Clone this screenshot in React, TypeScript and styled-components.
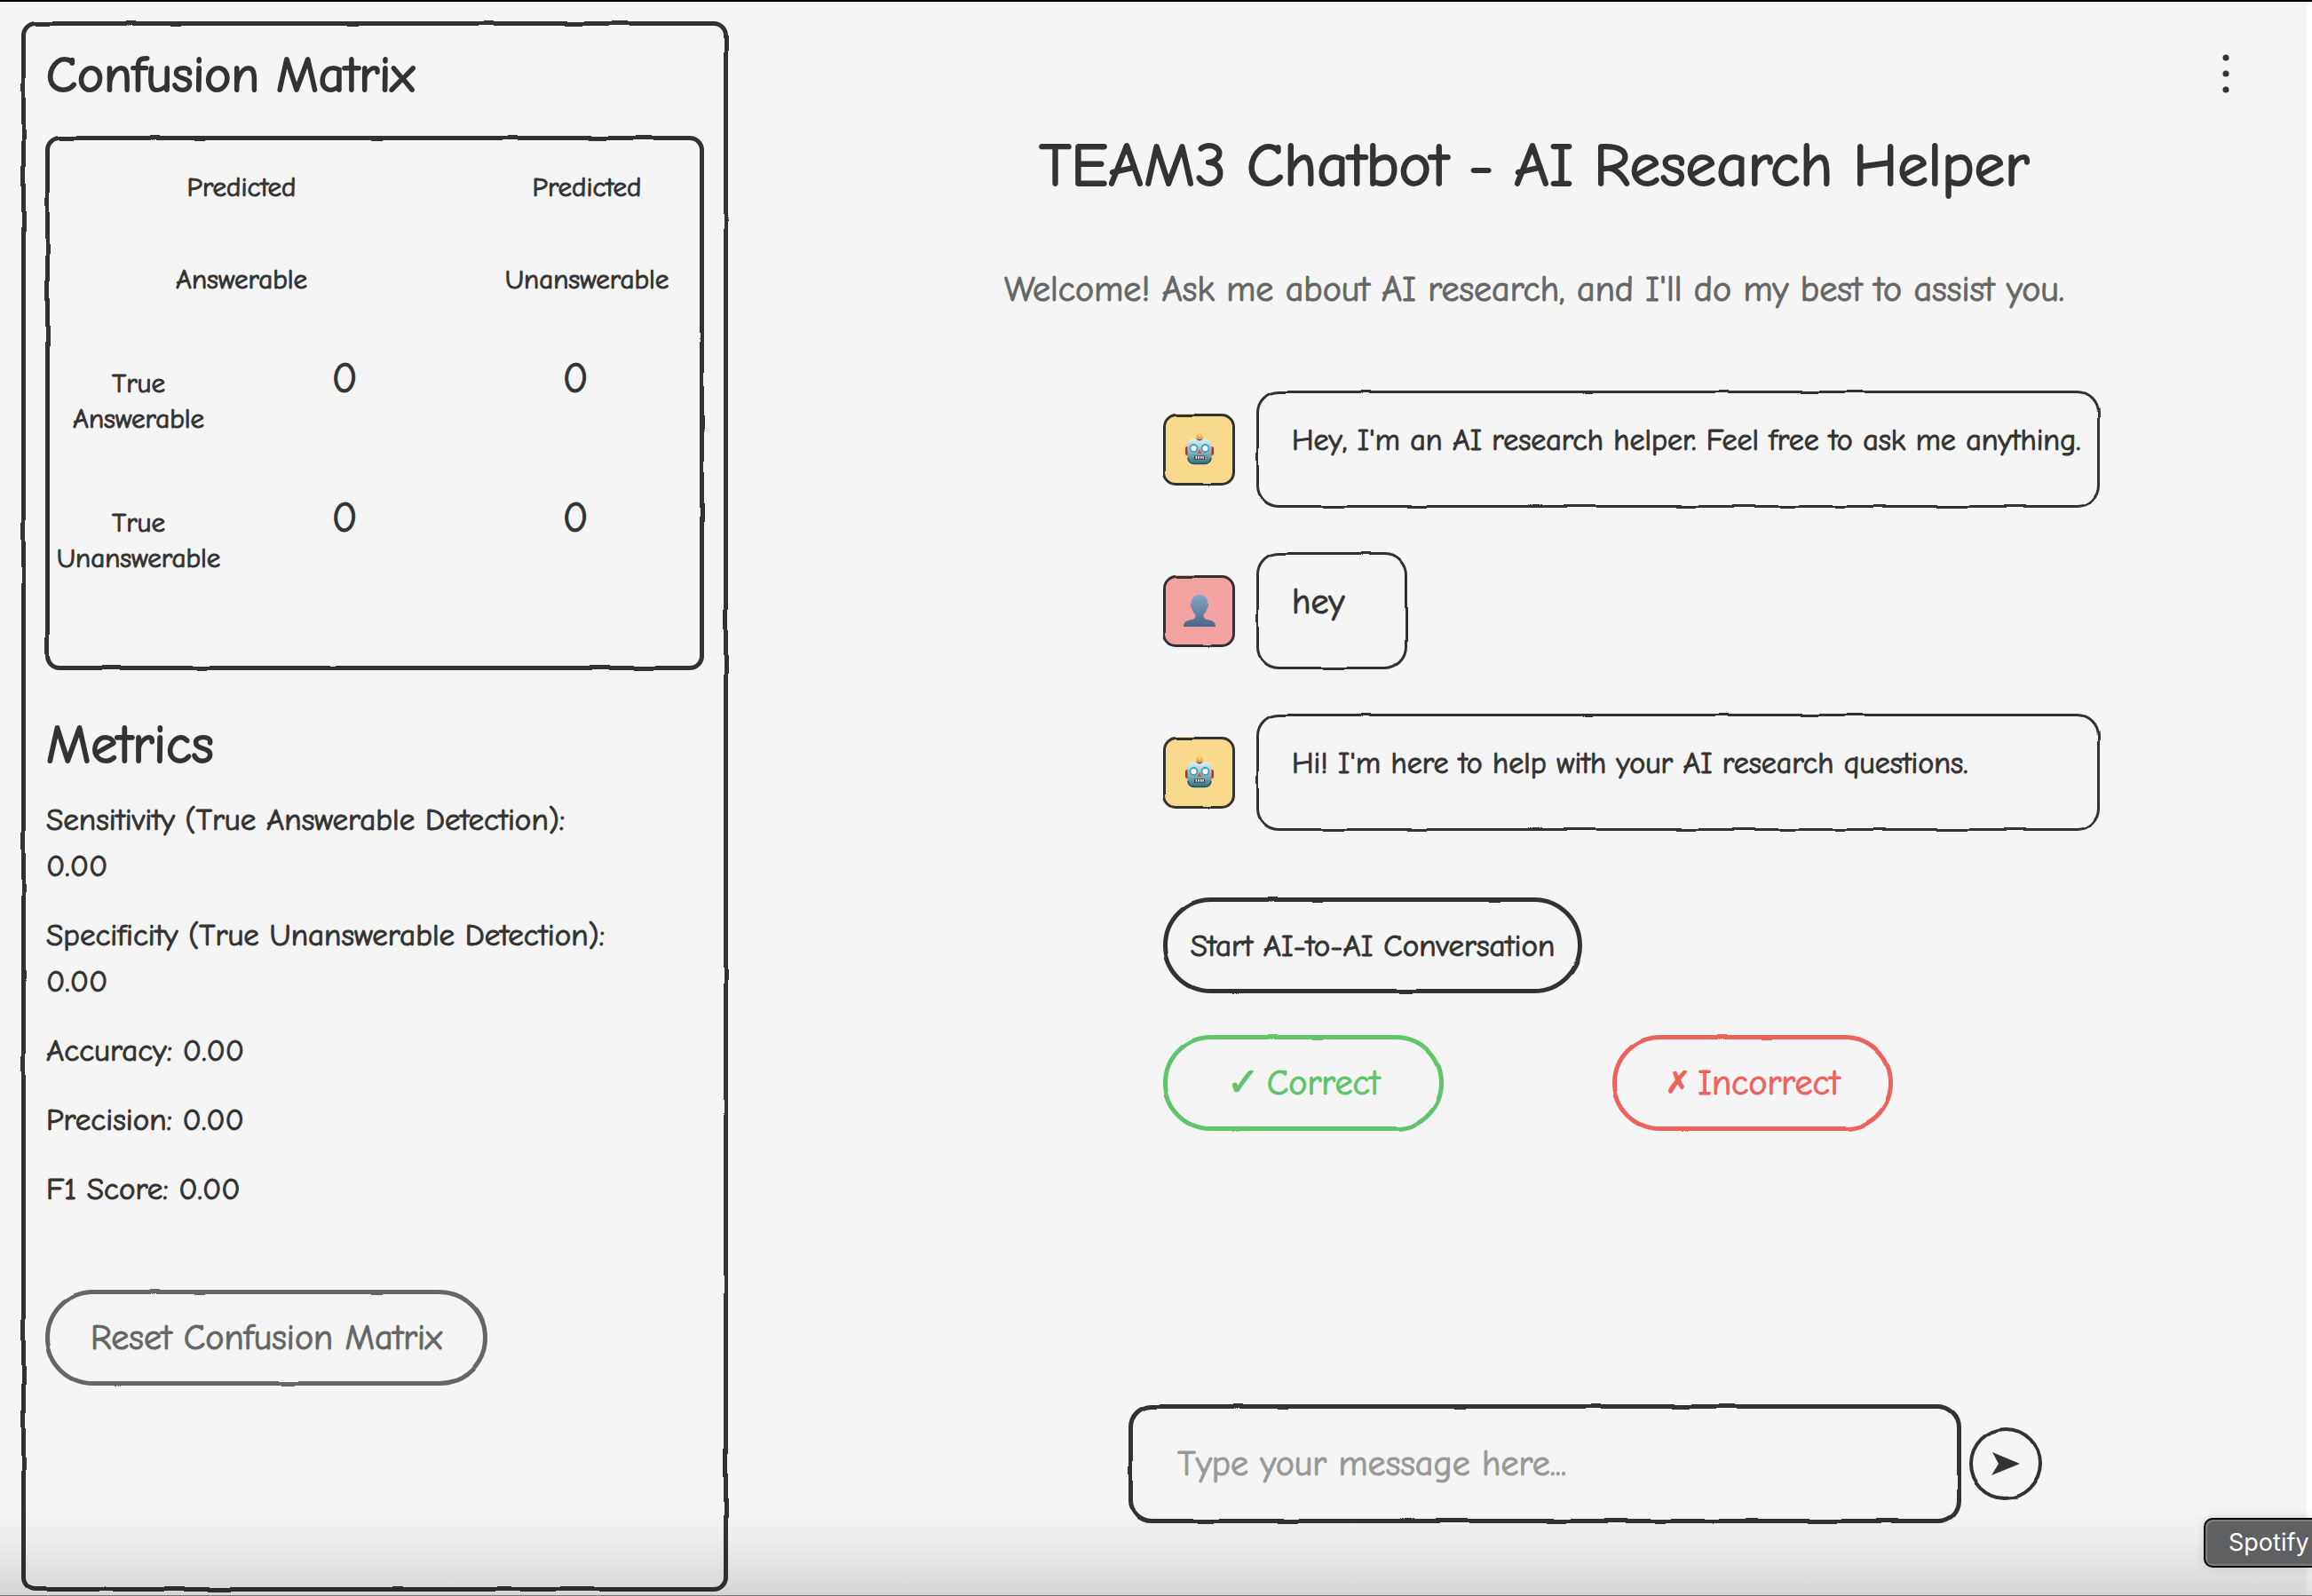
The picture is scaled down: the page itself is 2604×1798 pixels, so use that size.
import React from "react";
import styled, { createGlobalStyle, css } from "styled-components";

const ink = "#333333";
const paper = "#f5f5f5";
const muted = "#666666";

const GlobalStyle = createGlobalStyle`
  *, *::before, *::after { box-sizing: border-box; }
  body {
    margin: 0;
    background: ${paper};
    color: ${ink};
    font-family: "Comic Sans MS", "Comic Neue", "Noto Sans", "DejaVu Sans", sans-serif;
    font-weight: 500;
    -webkit-text-stroke: 1px;
  }
  h1, h2, h3, p { margin: 0; font-weight: 500; }
  button, input { font: inherit; color: inherit; }
`;

/* Hand-drawn outline: a displaced border laid over the box */
const sketch = css<{ $line?: number; $radius?: number; $tone?: string }>`
  position: relative;
  &::before {
    content: "";
    position: absolute;
    inset: 0;
    border: ${(p) => p.$line ?? 5}px solid ${(p) => p.$tone ?? ink};
    border-radius: ${(p) => p.$radius ?? 16}px;
    filter: url(#sketch);
    pointer-events: none;
  }
`;

const Page = styled.div`
  position: relative;
  display: grid;
  grid-template-columns: minmax(0, 796px) minmax(0, 1fr);
  gap: 38px;
  min-height: 100vh;
  padding: 22px 6px 5px 24px;
  border-top: 2px solid #000000;
  overflow: hidden;
`;

const Filters = styled.svg`
  position: absolute;
  width: 0;
  height: 0;
`;

const EdgeStrip = styled.div`
  position: absolute;
  top: 0;
  right: 0;
  bottom: 0;
  width: 6px;
  background: #ffffff;
`;

const BottomFade = styled.div`
  position: absolute;
  left: 0;
  right: 0;
  bottom: 0;
  height: 100px;
  border-bottom: 1px solid #777777;
  background: linear-gradient(rgba(0, 0, 0, 0), rgba(0, 0, 0, 0.03) 35%, rgba(0, 0, 0, 0.13));
  pointer-events: none;
`;

const Sidebar = styled.aside`
  ${sketch}
  padding: 29px 27px;
`;

const PanelTitle = styled.h2`
  padding-left: 1px;
  font-size: 57px;
  line-height: 64px;
  -webkit-text-stroke: 2px;
`;

const MatrixBox = styled.div`
  ${sketch}
  height: 602px;
  margin-top: 36px;
  padding: 6px 5px;
`;

const Matrix = styled.table`
  display: block;
  font-size: 31px;
  text-align: center;
  thead, tbody { display: block; }
  th, td { padding: 0; font-weight: 500; }
`;

const HeadRow = styled.tr`
  display: grid;
  grid-template-columns: 432px 254px;
  justify-content: space-between;
  line-height: 104px;
  span { display: block; }
`;

const BodyRow = styled.tr`
  display: grid;
  grid-template-columns: 200px 264px 256px;
  height: 157px;
  th { padding-top: 45px; line-height: 40px; }
`;

const Count = styled.td`
  font-size: 48px;
  line-height: 120px;
`;

const MetricsTitle = styled.h3`
  margin-top: 53px;
  padding-left: 1px;
  font-size: 60px;
  line-height: 64px;
  -webkit-text-stroke: 2px;
`;

const Metrics = styled.div`
  display: grid;
  gap: 26px;
  margin-top: 26px;
  padding-left: 1px;
  font-size: 35px;
  line-height: 52px;
  span { display: block; }
`;

const PillButton = styled.button<{ $width: number; $tone?: string; $size?: number }>`
  ${sketch}
  display: flex;
  align-items: center;
  justify-content: center;
  gap: 8px;
  width: ${(p) => p.$width}px;
  height: 108px;
  padding: 0;
  border: 0;
  background: transparent;
  color: ${(p) => p.$tone ?? ink};
  font-size: ${(p) => p.$size ?? 40}px;
  white-space: nowrap;
  cursor: pointer;
`;

const Mark = styled.span<{ $size: number }>`
  font-size: ${(p) => p.$size}px;
  line-height: 52px;
`;

const ResetArea = styled.div`
  margin-top: 87px;
`;

const Main = styled.main`
  display: flex;
  flex-direction: column;
`;

const MenuButton = styled.button`
  align-self: flex-end;
  display: grid;
  place-items: center;
  width: 60px;
  height: 60px;
  margin: 29px 61px 0 0;
  padding: 0;
  border: 0;
  background: transparent;
`;

const Heading = styled.h1`
  margin-top: 29px;
  font-size: 69px;
  line-height: 90px;
  text-align: center;
  white-space: nowrap;
  -webkit-text-stroke: 2px;
`;

const Welcome = styled.p`
  margin-top: 68px;
  color: ${muted};
  font-size: 40px;
  line-height: 52px;
  text-align: center;
  white-space: nowrap;
`;

const Chat = styled.section`
  display: grid;
  gap: 50px;
  margin: 88px 233px 0 452px;
`;

const Message = styled.div`
  display: flex;
  align-items: center;
  gap: 24px;
`;

const Avatar = styled.div<{ $fill: string }>`
  ${sketch}
  display: grid;
  place-items: center;
  flex: none;
  width: 81px;
  height: 81px;
  border-radius: 15px;
  background: ${(p) => p.$fill};
`;

const Bubble = styled.p<{ $short?: boolean }>`
  ${sketch}
  flex: ${(p) => (p.$short ? "0 0 170px" : "1")};
  min-width: 0;
  height: 132px;
  padding: 30px 0 0 40px;
  font-size: ${(p) => (p.$short ? 40 : 34)}px;
  line-height: 52px;
  white-space: nowrap;
`;

const Actions = styled.div`
  display: grid;
  gap: 47px;
  margin: 75px 0 0 452px;
`;

const Verdicts = styled.div`
  display: flex;
  gap: 190px;
`;

const Composer = styled.form`
  display: flex;
  align-items: center;
  gap: 9px;
  margin: auto 298px 77px 413px;
`;

const Field = styled.label`
  ${sketch}
  flex: 1;
  display: flex;
  height: 134px;
`;

const TextInput = styled.input`
  width: 100%;
  padding: 0 55px;
  border: 0;
  outline: 0;
  background: transparent;
  font-size: 40px;
  &::placeholder { color: #999999; opacity: 1; }
`;

const SendButton = styled.button`
  ${sketch}
  display: grid;
  place-items: center;
  width: 82px;
  height: 82px;
  padding: 0;
  border: 0;
  background: transparent;
`;

const Tooltip = styled.div`
  position: absolute;
  right: 0;
  bottom: 32px;
  width: 122px;
  height: 56px;
  padding-left: 26px;
  border: 2px solid #000000;
  border-right: 0;
  border-radius: 10px 0 0 10px;
  background: #5f6061;
  box-shadow: inset 2px 2px #7b7b7c, inset 0 -2px #7b7b7c, 0 0 12px rgba(0, 0, 0, 0.12);
  color: #ffffff;
  font-family: Inter, Roboto, sans-serif;
  font-size: 27px;
  font-weight: 400;
  line-height: 52px;
  -webkit-text-stroke: 0;
`;

const Robot = () => (
  <svg width="34" height="36" viewBox="0 0 34 36" aria-hidden="true">
    <defs>
      <linearGradient id="robotFace" x1="0" y1="0" x2="0" y2="1">
        <stop offset="0" stopColor="#dff1f3" />
        <stop offset="0.5" stopColor="#8fb9c2" />
        <stop offset="1" stopColor="#2f7182" />
      </linearGradient>
    </defs>
    <rect x="1" y="15" width="5" height="10" rx="2" fill="#b5322f" />
    <rect x="28" y="15" width="5" height="10" rx="2" fill="#b5322f" />
    <ellipse cx="17" cy="7" rx="4" ry="2.5" fill="#5b3a7d" />
    <circle cx="17" cy="4" r="3.2" fill="#f5a52c" />
    <circle cx="17" cy="2.6" r="1.6" fill="#ffe27a" />
    <rect x="3.5" y="6.5" width="27" height="28" rx="6" fill="url(#robotFace)" />
    <path d="M4 28 Q5 34.5 11 34.5 H23 Q29 34.5 30 28" fill="none" stroke="#1f5563" strokeWidth="1.5" />
    <path d="M13.5 6.8 Q17 10 20.5 6.8Z" fill="#5b3a7d" />
    <circle cx="10.5" cy="17" r="4" fill="#ffffff" stroke="#3d9fc6" strokeWidth="1.8" />
    <circle cx="23.5" cy="17" r="4" fill="#ffffff" stroke="#3d9fc6" strokeWidth="1.8" />
    <path d="M17 18 L20 23 H14Z" fill="#e0524d" />
    <rect x="11" y="25.5" width="12" height="4" rx="1" fill="#3a2a2a" />
    <path d="M12.5 26h1.6v2.8h-1.6zM15.2 26h1.6v2.8h-1.6zM17.9 26h1.6v2.8h-1.6zM20.4 26h1.4v2.8h-1.4z" fill="#ffffff" />
  </svg>
);

const Person = () => (
  <svg width="38" height="36" viewBox="0 0 38 36" aria-hidden="true">
    <defs>
      <linearGradient id="bust" x1="0" y1="0" x2="0" y2="1">
        <stop offset="0" stopColor="#86a6c6" />
        <stop offset="1" stopColor="#4b6689" />
      </linearGradient>
    </defs>
    <path
      d="M19 0C25 0 28.500 4.500 28.500 10C29.800 11 29 14.500 27.600 15.500C27 19 25 21 23.500 22.500C23.500 27 25 27.500 29 28.200C34.500 29 37 31.500 37 36H1C1 31.500 3.500 29 9 28.200C13 27.500 14.500 27 14.500 22.500C13 21 11 19 10.400 15.500C9 14.500 8.200 11 9.500 10C9.500 4.500 13 0 19 0Z"
      fill="url(#bust)"
    />
  </svg>
);

const BotMessage = ({ children }: { children: React.ReactNode }) => (
  <Message>
    <Avatar $fill="#f9d98c" $line={3} $radius={15}><Robot /></Avatar>
    <Bubble $line={3} $radius={25}>{children}</Bubble>
  </Message>
);

const metrics = [
  { label: "Sensitivity (True Answerable Detection):", value: "0.00", wrap: true },
  { label: "Specificity (True Unanswerable Detection):", value: "0.00", wrap: true },
  { label: "Accuracy:", value: "0.00", wrap: false },
  { label: "Precision:", value: "0.00", wrap: false },
  { label: "F1 Score:", value: "0.00", wrap: false },
];

export default function App() {
  return (
    <>
      <GlobalStyle />
      <Page>
        <Filters aria-hidden="true">
          <filter id="sketch" x="-5%" y="-5%" width="110%" height="110%">
            <feTurbulence type="fractalNoise" baseFrequency="0.02" numOctaves="1" seed="2" result="noise" />
            <feDisplacementMap in="SourceGraphic" in2="noise" scale="3" xChannelSelector="R" yChannelSelector="G" />
          </filter>
        </Filters>
        <EdgeStrip />
        <Sidebar>
          <PanelTitle>Confusion Matrix</PanelTitle>
          <MatrixBox>
            <Matrix>
              <thead>
                <HeadRow>
                  <th scope="col"><span>Predicted</span><span>Answerable</span></th>
                  <th scope="col"><span>Predicted</span><span>Unanswerable</span></th>
                </HeadRow>
              </thead>
              <tbody>
                <BodyRow>
                  <th scope="row">True<br />Answerable</th>
                  <Count>0</Count>
                  <Count>0</Count>
                </BodyRow>
                <BodyRow>
                  <th scope="row">True<br />Unanswerable</th>
                  <Count>0</Count>
                  <Count>0</Count>
                </BodyRow>
              </tbody>
            </Matrix>
          </MatrixBox>
          <MetricsTitle>Metrics</MetricsTitle>
          <Metrics>
            {metrics.map((m) => (
              <p key={m.label}>
                {m.label} {m.wrap ? <span>{m.value}</span> : m.value}
              </p>
            ))}
          </Metrics>
          <ResetArea>
            <PillButton type="button" $width={498} $tone={muted} $radius={54}>Reset Confusion Matrix</PillButton>
          </ResetArea>
        </Sidebar>
        <Main>
          <MenuButton type="button" aria-label="Menu">
            <svg width="8" height="44" viewBox="0 0 8 44" fill={ink} aria-hidden="true">
              <circle cx="4" cy="4" r="3.500" />
              <circle cx="4" cy="22" r="3.500" />
              <circle cx="4" cy="40" r="3.500" />
            </svg>
          </MenuButton>
          <Heading>TEAM3 Chatbot - AI Research Helper</Heading>
          <Welcome>Welcome! Ask me about AI research, and I'll do my best to assist you.</Welcome>
          <Chat>
            <BotMessage>Hey, I'm an AI research helper. Feel free to ask me anything.</BotMessage>
            <Message>
              <Avatar $fill="#f3a2a2" $line={3} $radius={15}><Person /></Avatar>
              <Bubble $short $line={3} $radius={25}>hey</Bubble>
            </Message>
            <BotMessage>Hi! I'm here to help with your AI research questions.</BotMessage>
          </Chat>
          <Actions>
            <PillButton type="button" $width={472} $radius={54} $size={35}>Start AI-to-AI Conversation</PillButton>
            <Verdicts>
              <PillButton type="button" $width={316} $tone="#5fc46b" $radius={54}><Mark $size={44}>✓</Mark> Correct</PillButton>
              <PillButton type="button" $width={316} $tone="#ee625d" $radius={54}><Mark $size={34}>✗</Mark> Incorrect</PillButton>
            </Verdicts>
          </Actions>
          <Composer onSubmit={(e) => e.preventDefault()}>
            <Field $radius={26}>
              <TextInput type="text" aria-label="Message" placeholder="Type your message here..." />
            </Field>
            <SendButton type="submit" aria-label="Send" $line={4} $radius={41}>
              <svg width="32" height="26" viewBox="0 0 32 26" aria-hidden="true">
                <path d="M1 0L32 13L0 26L8 13Z" fill={ink} />
              </svg>
            </SendButton>
          </Composer>
        </Main>
        <BottomFade />
        <Tooltip>Spotify</Tooltip>
      </Page>
    </>
  );
}
